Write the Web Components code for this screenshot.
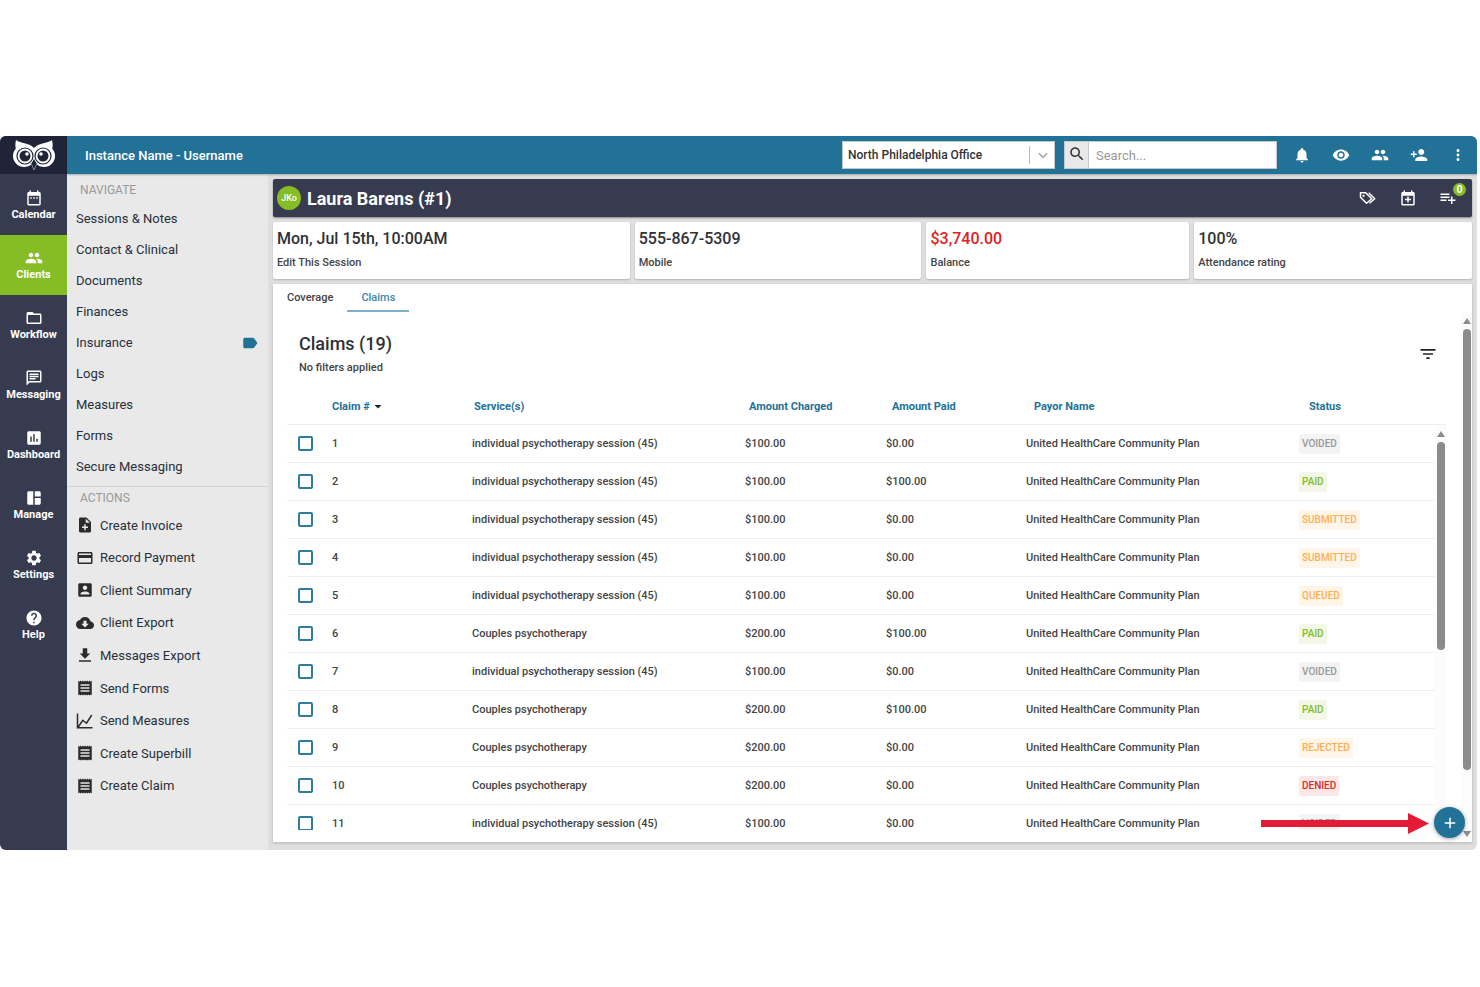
<!DOCTYPE html>
<html lang="en">
<head>
<meta charset="utf-8">
<meta name="viewport" content="width=device-width, initial-scale=1">
<title>Claims</title>
<style>
  :root {
    --blue: #227297;
    --navy: #363b4f;
    --green: #86bc25;
    --ink: #2f3136;
    --grey: #e9e9e9;
  }
  body {
    box-sizing: border-box;
    height: 100vh;
    margin: 0;
    padding: 136px 3px 137px 0;
    background: #fff;
    color: var(--ink);
    font-family: Roboto, "Liberation Sans", sans-serif;
    font-size: 12px;
    font-weight: 500;
  }
</style>
</head>
<body>
<practice-app></practice-app>

<script>
const ICONS = {
  calendar: '<path d="M9 11H7v2h2v-2zm4 0h-2v2h2v-2zm4 0h-2v2h2v-2zm2-7h-1V2h-2v2H8V2H6v2H5c-1.1 0-2 .9-2 2v14c0 1.1.9 2 2 2h14c1.1 0 2-.9 2-2V6c0-1.1-.9-2-2-2zm0 16H5V9h14v11z"/>',
  people: '<path d="M16 11c1.66 0 2.99-1.34 2.99-3S17.66 5 16 5s-3 1.34-3 3 1.34 3 3 3zm-8 0c1.66 0 2.99-1.34 2.99-3S9.66 5 8 5 5 6.34 5 8s1.34 3 3 3zm0 2c-2.33 0-7 1.17-7 3.5V19h14v-2.5c0-2.33-4.67-3.5-7-3.5zm8 0c-.29 0-.62.02-.97.05 1.16.84 1.97 1.97 1.97 3.45V19h6v-2.5c0-2.33-4.67-3.5-7-3.5z"/>',
  folder: '<path d="M20 6h-8l-2-2H4c-1.1 0-2 .9-2 2v12c0 1.1.9 2 2 2h16c1.1 0 2-.9 2-2V8c0-1.1-.9-2-2-2zm0 12H4V8h16v10z"/>',
  chat: '<path d="M4 4h16v12H5.17L4 17.17V4m0-2c-1.1 0-2 .9-2 2v18l4-4h14c1.1 0 2-.9 2-2V4c0-1.1-.9-2-2-2H4zm2 10h8v2H6v-2zm0-3h12v2H6V9zm0-3h12v2H6V6z"/>',
  chart: '<path d="M19 3H5c-1.1 0-2 .9-2 2v14c0 1.1.9 2 2 2h14c1.1 0 2-.9 2-2V5c0-1.1-.9-2-2-2zM9 17H7v-7h2v7zm4 0h-2V7h2v10zm4 0h-2v-4h2v4z"/>',
  manage: '<path d="M11 21H5c-1.1 0-2-.9-2-2V5c0-1.1.9-2 2-2h6v18zm2 0h6c1.1 0 2-.9 2-2v-7h-8v9zm8-11V5c0-1.1-.9-2-2-2h-6v7h8z"/>',
  settings: '<path d="M19.14 12.94c.04-.3.06-.61.06-.94 0-.32-.02-.64-.07-.94l2.03-1.58c.18-.14.23-.41.12-.61l-1.92-3.32c-.12-.22-.37-.29-.59-.22l-2.39.96c-.5-.38-1.03-.7-1.62-.94l-.36-2.54c-.04-.24-.24-.41-.48-.41h-3.84c-.24 0-.43.17-.47.41l-.36 2.54c-.59.24-1.13.57-1.62.94l-2.39-.96c-.22-.08-.47 0-.59.22L2.74 8.87c-.12.21-.08.47.12.61l2.03 1.58c-.05.3-.09.63-.09.94s.02.64.07.94l-2.03 1.58c-.18.14-.23.41-.12.61l1.92 3.32c.12.22.37.29.59.22l2.39-.96c.5.38 1.03.7 1.62.94l.36 2.54c.05.24.24.41.48.41h3.84c.24 0 .44-.17.47-.41l.36-2.54c.59-.24 1.13-.56 1.62-.94l2.39.96c.22.08.47 0 .59-.22l1.92-3.32c.12-.22.07-.47-.12-.61l-2.01-1.58zM12 15.6c-1.98 0-3.6-1.62-3.6-3.6s1.62-3.6 3.6-3.6 3.6 1.62 3.6 3.6-1.62 3.6-3.6 3.6z"/>',
  help: '<path d="M12 2C6.48 2 2 6.48 2 12s4.48 10 10 10 10-4.48 10-10S17.52 2 12 2zm1 17h-2v-2h2v2zm2.07-7.75l-.9.92C13.45 12.9 13 13.5 13 15h-2v-.5c0-1.1.45-2.1 1.17-2.83l1.24-1.26c.37-.36.59-.86.59-1.41 0-1.1-.9-2-2-2s-2 .9-2 2H8c0-2.21 1.79-4 4-4s4 1.79 4 4c0 .88-.36 1.68-.93 2.25z"/>',
  bell: '<path d="M12 22c1.1 0 2-.9 2-2h-4c0 1.1.89 2 2 2zm6-6v-5c0-3.07-1.64-5.64-4.5-6.32V4c0-.83-.67-1.5-1.5-1.5s-1.5.67-1.5 1.5v.68C7.63 5.36 6 7.92 6 11v5l-2 2v1h16v-1l-2-2z"/>',
  eye: '<path d="M12 4.5C7 4.5 2.73 7.61 1 12c1.73 4.39 6 7.5 11 7.5s9.27-3.11 11-7.5c-1.73-4.39-6-7.5-11-7.5zM12 17c-2.76 0-5-2.24-5-5s2.24-5 5-5 5 2.24 5 5-2.24 5-5 5zm0-8c-1.66 0-3 1.34-3 3s1.34 3 3 3 3-1.34 3-3-1.34-3-3-3z"/>',
  'person-add': '<path d="M15 12c2.21 0 4-1.79 4-4s-1.79-4-4-4-4 1.79-4 4 1.79 4 4 4zm-9-2V7H4v3H1v2h3v3h2v-3h3v-2H6zm9 4c-2.67 0-8 1.34-8 4v2h16v-2c0-2.66-5.33-4-8-4z"/>',
  more: '<path d="M12 8c1.1 0 2-.9 2-2s-.9-2-2-2-2 .9-2 2 .9 2 2 2zm0 2c-1.1 0-2 .9-2 2s.9 2 2 2 2-.9 2-2-.9-2-2-2zm0 6c-1.1 0-2 .9-2 2s.9 2 2 2 2-.9 2-2-.9-2-2-2z"/>',
  search: '<path d="M15.5 14h-.79l-.28-.27C15.41 12.59 16 11.11 16 9.5 16 5.91 13.09 3 9.5 3S3 5.91 3 9.5 5.91 16 9.5 16c1.61 0 3.09-.59 4.23-1.57l.27.28v.79l5 4.99L20.49 19l-4.99-5zm-6 0C7.01 14 5 11.99 5 9.5S7.01 5 9.5 5 14 7.01 14 9.5 11.99 14 9.5 14z"/>',
  down: '<path d="M5 9l7 7 7-7" fill="none" stroke="currentColor" stroke-width="3"/>',
  label: '<path d="M17.63 5.84C17.27 5.33 16.67 5 16 5H5c-1.1 0-2 .9-2 2v10c0 1.1.9 2 2 2h11c.67 0 1.27-.33 1.63-.84L22 12l-4.37-6.16z"/>',
  'note-add': '<path d="M14 2H6c-1.1 0-2 .9-2 2v16c0 1.1.89 2 2 2h12c1.1 0 2-.9 2-2V8l-6-6zm2 14h-3v3h-2v-3H8v-2h3v-3h2v3h3v2zm-3-7V3.5L18.5 9H13z"/>',
  card: '<path d="M20 4H4c-1.11 0-2 .89-2 2v12c0 1.11.89 2 2 2h16c1.11 0 2-.89 2-2V6c0-1.11-.89-2-2-2zm0 14H4v-6h16v6zm0-10H4V6h16v2z"/>',
  account: '<path d="M3 5v14c0 1.1.89 2 2 2h14c1.1 0 2-.9 2-2V5c0-1.1-.9-2-2-2H5c-1.11 0-2 .9-2 2zm12 4c0 1.66-1.34 3-3 3s-3-1.34-3-3 1.34-3 3-3 3 1.34 3 3zm-9 8c0-2 4-3.1 6-3.1s6 1.1 6 3.1v1H6v-1z"/>',
  cloud: '<path d="M19.35 10.04C18.67 6.59 15.64 4 12 4 9.11 4 6.6 5.64 5.35 8.04 2.34 8.36 0 10.91 0 14c0 3.31 2.69 6 6 6h13c2.76 0 5-2.24 5-5 0-2.64-2.05-4.78-4.65-4.96zM17 13l-5 5-5-5h3V9h4v4h3z"/>',
  download: '<path d="M19 10h-4V3H9v7H5l7 7 7-7zM4 19v2h16v-2H4z"/>',
  receipt: '<path d="M18 17H6v-2h12v2zm0-4H6v-2h12v2zm0-4H6V7h12v2zM3 22l1.5-1.5L6 22l1.5-1.5L9 22l1.5-1.5L12 22l1.5-1.5L15 22l1.5-1.5L18 22l1.5-1.5L21 22V2l-1.5 1.5L18 2l-1.5 1.5L15 2l-1.5 1.5L12 2l-1.5 1.5L9 2 7.5 3.5 6 2 4.5 3.5 3 2v20z"/>',
  trend: '<path d="M2 2v19h20M3 20l6-9 5 4 7-11" fill="none" stroke="currentColor" stroke-width="2"/>',
  tags: '<g fill="none" stroke="currentColor" stroke-width="2" stroke-linejoin="round"><path d="M2 5v6l8 8 7-6-8-8z"/><path d="M13 5l8 8-7 6"/></g><circle cx="6" cy="9" r="1.5"/>',
  'calendar-add': '<path d="M19 4h-1V2h-2v2H8V2H6v2H5c-1.1 0-2 .9-2 2v14c0 1.1.9 2 2 2h14c1.1 0 2-.9 2-2V6c0-1.1-.9-2-2-2zm0 16H5V9h14v11zM11 10h2v3h3v2h-3v3h-2v-3H8v-2h3z"/>',
  'list-add': '<path d="M14 10H2v2h12v-2zm0-4H2v2h12V6zm4 8v-4h-2v4h-4v2h4v4h2v-4h4v-2h-4zM2 16h8v-2H2v2z"/>',
  filter: '<path d="M10 18h4v-2h-4v2zM3 6v2h18V6H3zm3 7h12v-2H6v2z"/>',
  plus: '<path d="M19 13h-6v6h-2v-6H5v-2h6V5h2v6h6v2z"/>',
  sort: '<path d="M5 8h14l-7 7z"/>'
};

class AppIcon extends HTMLElement {
  constructor() {
    super();
    this.attachShadow({ mode: "open" });
  }

  connectedCallback() {
    this.shadowRoot.innerHTML = /*html*/ `
      <style>
        :host { display: inline-flex; flex: none; width: 18px; height: 18px; }
        svg { width: 100%; height: 100%; fill: currentColor; }
      </style>
      <svg viewBox="0 0 24 24" aria-hidden="true">${ICONS[this.getAttribute("name")]}</svg>
    `;
  }
}

class OwlLogo extends HTMLElement {
  constructor() {
    super();
    this.attachShadow({ mode: "open" });
  }

  connectedCallback() {
    this.shadowRoot.innerHTML = /*html*/ `
      <style>
        :host { display: flex; align-items: center; justify-content: center; height: 38px; background: #1f2438; }
        svg { width: 42px; height: 32px; }
      </style>
      <svg viewBox="0 0 42 32" role="img" aria-label="Owl">
        <g fill="#fff">
          <path d="M3 1c5 4 12 2 18 8 6-6 13-4 18-8 1 4 1 8-1 12L21 25 4 13C2 9 2 5 3 1z"/>
          <circle cx="11" cy="17" r="11"/>
          <circle cx="31" cy="17" r="11"/>
        </g>
        <g fill="none" stroke="#1f2438" stroke-width="1.2">
          <circle cx="12" cy="17" r="8"/>
          <circle cx="30" cy="17" r="8"/>
        </g>
        <g fill="#1f2438">
          <circle cx="12" cy="17" r="5.500"/>
          <circle cx="30" cy="17" r="5.500"/>
          <path d="M21 20l3 5-3 6-3-6z"/>
        </g>
        <path d="M18 24l3 7 3-7" fill="none" stroke="#80869a" stroke-width="1"/>
        <g fill="#fff">
          <circle cx="14" cy="15" r="1.800"/>
          <circle cx="28" cy="15" r="1.800"/>
        </g>
      </svg>
    `;
  }
}

class RailItem extends HTMLElement {
  constructor() {
    super();
    this.attachShadow({ mode: "open" });
  }

  connectedCallback() {
    this.shadowRoot.innerHTML = /*html*/ `
      <style>
        :host { display: block; }
        :host([active]) { background: var(--green); }
        a {
          display: flex;
          flex-direction: column;
          align-items: center;
          justify-content: center;
          height: 60px;
          color: #fff;
          font-size: 11px;
          font-weight: 700;
          line-height: 15px;
          text-decoration: none;
        }
      </style>
      <a href="#"><app-icon name="${this.getAttribute("icon")}"></app-icon><slot></slot></a>
    `;
  }
}

class AppRail extends HTMLElement {
  constructor() {
    super();
    this.attachShadow({ mode: "open" });
  }

  connectedCallback() {
    this.shadowRoot.innerHTML = /*html*/ `
      <style>
        :host { display: block; background: var(--navy); }
        nav { padding-top: 1px; }
      </style>
      <owl-logo></owl-logo>
      <nav>
        <rail-item icon="calendar">Calendar</rail-item>
        <rail-item icon="people" active>Clients</rail-item>
        <rail-item icon="folder">Workflow</rail-item>
        <rail-item icon="chat">Messaging</rail-item>
        <rail-item icon="chart">Dashboard</rail-item>
        <rail-item icon="manage">Manage</rail-item>
        <rail-item icon="settings">Settings</rail-item>
        <rail-item icon="help">Help</rail-item>
      </nav>
    `;
  }
}

class TopBar extends HTMLElement {
  constructor() {
    super();
    this.attachShadow({ mode: "open" });
  }

  connectedCallback() {
    this.shadowRoot.innerHTML = /*html*/ `
      <style>
        :host {
          display: flex;
          align-items: center;
          box-sizing: border-box;
          height: 38px;
          padding-left: 18px;
          background: var(--blue);
          color: #fff;
          box-shadow: 0 1px 2px rgba(0, 0, 0, .25);
        }
        strong { flex: 1; font-size: 13px; font-weight: 500; }
        .office { position: relative; width: 213px; margin-right: 9px; }
        select, input {
          box-sizing: border-box;
          width: 100%;
          height: 28px;
          margin: 0;
          border: 1px solid #c4c8ca;
          border-radius: 0;
          background: #fff;
          color: #333;
          font: inherit;
        }
        select { appearance: none; padding: 0 32px 0 5px; font-size: 12px; }
        .arrow {
          position: absolute;
          top: 5px;
          right: 5px;
          display: flex;
          align-items: center;
          height: 18px;
          padding-left: 6px;
          border-left: 1px solid #bbb;
          color: #aaa;
          pointer-events: none;
        }
        .arrow app-icon { width: 14px; height: 14px; }
        form { display: flex; width: 213px; margin-right: 5px; }
        form button {
          width: 24px;
          height: 28px;
          padding: 0;
          border: 1px solid #c4c8ca;
          border-right: 0;
          background: var(--grey);
          color: #333;
        }
        form input { flex: 1; width: 0; padding: 0 7px; font-size: 13px; font-weight: 400; }
        input::placeholder { color: #999; }
        .tools { display: flex; }
        .tools button {
          display: flex;
          justify-content: center;
          width: 39px;
          padding: 0;
          border: 0;
          background: none;
          color: inherit;
        }
      </style>
      <strong>Instance Name - Username</strong>
      <div class="office">
        <select aria-label="Office"><option>North Philadelphia Office</option></select>
        <span class="arrow"><app-icon name="down"></app-icon></span>
      </div>
      <form>
        <button type="button" aria-label="Search"><app-icon name="search"></app-icon></button>
        <input type="text" placeholder="Search..." aria-label="Search">
      </form>
      <div class="tools">
        <button aria-label="Notifications"><app-icon name="bell"></app-icon></button>
        <button aria-label="Watch"><app-icon name="eye"></app-icon></button>
        <button aria-label="Clients"><app-icon name="people"></app-icon></button>
        <button aria-label="Add client"><app-icon name="person-add"></app-icon></button>
        <button aria-label="More"><app-icon name="more"></app-icon></button>
      </div>
    `;
  }
}

class SideMenu extends HTMLElement {
  constructor() {
    super();
    this.attachShadow({ mode: "open" });
  }

  connectedCallback() {
    this.shadowRoot.innerHTML = /*html*/ `
      <style>
        :host {
          display: flex;
          flex-direction: column;
          background: var(--grey);
          font-size: 13px;
        }
        h2 { margin: 0; padding: 0 13px; color: #999; font-size: 12px; font-weight: 400; line-height: 16px; }
        ul { margin: 0; padding: 0; list-style: none; }
        a { display: flex; align-items: center; color: #27303a; font-weight: 400; text-decoration: none; }
        .pages { padding: 8px 0 4px; border-bottom: 1px solid #d4d4d4; }
        .pages ul { padding-top: 5px; }
        .pages a { justify-content: space-between; height: 31px; padding: 0 9px; }
        .pages app-icon { color: var(--blue); }
        .actions { display: flex; flex: 1; flex-direction: column; padding-top: 3px; }
        .actions ul { display: grid; flex: 1; grid-auto-rows: 1fr; padding: 3px 0 48px; }
        .actions li { display: flex; }
        .actions a { gap: 6px; padding: 0 9px; }
        .actions app-icon { color: #2b2b2b; }
      </style>
      <nav class="pages">
        <h2>NAVIGATE</h2>
        <ul>
          <li><a href="#">Sessions &amp; Notes</a></li>
          <li><a href="#">Contact &amp; Clinical</a></li>
          <li><a href="#">Documents</a></li>
          <li><a href="#">Finances</a></li>
          <li><a href="#">Insurance <app-icon name="label"></app-icon></a></li>
          <li><a href="#">Logs</a></li>
          <li><a href="#">Measures</a></li>
          <li><a href="#">Forms</a></li>
          <li><a href="#">Secure Messaging</a></li>
        </ul>
      </nav>
      <nav class="actions">
        <h2>ACTIONS</h2>
        <ul>
          <li><a href="#"><app-icon name="note-add"></app-icon>Create Invoice</a></li>
          <li><a href="#"><app-icon name="card"></app-icon>Record Payment</a></li>
          <li><a href="#"><app-icon name="account"></app-icon>Client Summary</a></li>
          <li><a href="#"><app-icon name="cloud"></app-icon>Client Export</a></li>
          <li><a href="#"><app-icon name="download"></app-icon>Messages Export</a></li>
          <li><a href="#"><app-icon name="receipt"></app-icon>Send Forms</a></li>
          <li><a href="#"><app-icon name="trend"></app-icon>Send Measures</a></li>
          <li><a href="#"><app-icon name="receipt"></app-icon>Create Superbill</a></li>
          <li><a href="#"><app-icon name="receipt"></app-icon>Create Claim</a></li>
        </ul>
      </nav>
    `;
  }
}

class ClientBar extends HTMLElement {
  constructor() {
    super();
    this.attachShadow({ mode: "open" });
  }

  connectedCallback() {
    this.shadowRoot.innerHTML = /*html*/ `
      <style>
        :host {
          display: flex;
          align-items: center;
          height: 38px;
          padding: 0 15px 0 4px;
          border-radius: 2px;
          background: var(--navy);
          color: #fff;
          box-shadow: 0 1px 2px rgba(0, 0, 0, .4);
        }
        .avatar {
          width: 24px;
          height: 24px;
          margin-right: 6px;
          border-radius: 50%;
          background: var(--green);
          font-size: 9px;
          line-height: 24px;
          text-align: center;
        }
        h1 { flex: 1; margin: 0; font-size: 18px; font-weight: 700; }
        .tools { display: flex; gap: 22px; }
        button { position: relative; display: flex; padding: 0; border: 0; background: none; color: inherit; }
        .count {
          position: absolute;
          top: -6px;
          right: -9px;
          width: 13px;
          height: 13px;
          border-radius: 50%;
          background: var(--green);
          font-size: 11px;
          font-weight: 700;
          line-height: 13px;
        }
      </style>
      <span class="avatar">JKo</span>
      <h1>Laura Barens (#1)</h1>
      <div class="tools">
        <button aria-label="Tags"><app-icon name="tags"></app-icon></button>
        <button aria-label="Add session"><app-icon name="calendar-add"></app-icon></button>
        <button aria-label="Tasks"><app-icon name="list-add"></app-icon><span class="count">0</span></button>
      </div>
    `;
  }
}

class StatCard extends HTMLElement {
  constructor() {
    super();
    this.attachShadow({ mode: "open" });
  }

  connectedCallback() {
    this.shadowRoot.innerHTML = /*html*/ `
      <style>
        :host {
          display: flex;
          flex-direction: column;
          gap: 5px;
          padding: 6px 4px 8px;
          border-radius: 2px;
          background: #fff;
          box-shadow: 0 1px 2px rgba(0, 0, 0, .2);
        }
        .value { font-size: 16px; line-height: 22px; }
        :host([debt]) .value { color: #dd2222; }
        .label { color: #444; font-size: 11px; line-height: 16px; }
      </style>
      <span class="value"><slot></slot></span>
      <span class="label">${this.getAttribute("label")}</span>
    `;
  }
}

class ScrollTrack extends HTMLElement {
  constructor() {
    super();
    this.attachShadow({ mode: "open" });
  }

  connectedCallback() {
    const size = this.getAttribute("thumb");
    this.shadowRoot.innerHTML = /*html*/ `
      <style>
        :host { display: flex; flex-direction: column; align-items: center; width: 11px; background: #fcfcfc; }
        svg { flex: none; width: 8px; height: 6px; margin: 6px 0 5px; fill: #8b8b8b; }
        .lane { flex: 1; }
        .thumb { width: 8px; height: ${size}%; border-radius: 4px; background: #8b8b8b; }
      </style>
      <svg viewBox="0 0 8 6"><path d="M4 0l4 6H0z"/></svg>
      <div class="lane"><div class="thumb"></div></div>
      <svg viewBox="0 0 8 6"><path d="M0 0h8L4 6z"/></svg>
    `;
  }
}

class StatusBadge extends HTMLElement {
  constructor() {
    super();
    this.attachShadow({ mode: "open" });
  }

  connectedCallback() {
    this.shadowRoot.innerHTML = /*html*/ `
      <style>
        :host {
          display: inline-block;
          padding: 0 3px;
          border-radius: 2px;
          background: #fff5e9;
          color: #ffae52;
          font-size: 10px;
          line-height: 20px;
        }
        :host([kind="VOIDED"]) { background: #f3f3f3; color: #999; }
        :host([kind="PAID"]) { background: #f2f7e8; color: #86bc25; }
        :host([kind="DENIED"]) { background: #fde7e7; color: #d92b2b; }
      </style>
      ${this.getAttribute("kind")}
    `;
  }
}

class ClaimsTable extends HTMLElement {
  constructor() {
    super();
    this.attachShadow({ mode: "open" });
    const single = "individual psychotherapy session (45)";
    const couples = "Couples psychotherapy";
    this.claims = [
      [single, "$100.00", "$0.00", "VOIDED"],
      [single, "$100.00", "$100.00", "PAID"],
      [single, "$100.00", "$0.00", "SUBMITTED"],
      [single, "$100.00", "$0.00", "SUBMITTED"],
      [single, "$100.00", "$0.00", "QUEUED"],
      [couples, "$200.00", "$100.00", "PAID"],
      [single, "$100.00", "$0.00", "VOIDED"],
      [couples, "$200.00", "$100.00", "PAID"],
      [couples, "$200.00", "$0.00", "REJECTED"],
      [couples, "$200.00", "$0.00", "DENIED"],
      [single, "$100.00", "$0.00", "VOIDED"]
    ];
  }

  row([service, charged, paid, status], i) {
    return /*html*/ `
      <tr>
        <td><input type="checkbox" aria-label="Select claim ${i + 1}"></td>
        <td>${i + 1}</td>
        <td>${service}</td>
        <td>${charged}</td>
        <td>${paid}</td>
        <td>United HealthCare Community Plan</td>
        <td><status-badge kind="${status}"></status-badge></td>
      </tr>
    `;
  }

  connectedCallback() {
    this.shadowRoot.innerHTML = /*html*/ `
      <style>
        :host { position: relative; display: flex; min-height: 0; }
        table { display: flex; flex: 1; flex-direction: column; min-height: 0; font-size: 11px; }
        thead { display: block; border-bottom: 1px solid #eee; }
        tbody { display: block; flex: 1; min-height: 0; margin-right: 11px; overflow: hidden; }
        tr { display: grid; align-items: center; height: 37px; border-bottom: 1px solid #efefef; }
        thead tr { grid-template-columns: 45px 142fr 275fr 143fr 142fr 275fr 137fr; height: 36px; border: 0; }
        tbody tr { grid-template-columns: 45px 140fr 273fr 141fr 140fr 273fr 136fr; }
        th, td { padding: 0; text-align: left; white-space: nowrap; }
        th { color: var(--blue); font-weight: 700; }
        td { color: #444; }
        th app-icon { width: 12px; height: 12px; vertical-align: -3px; color: #222; }
        td:first-child { display: flex; padding-left: 11px; }
        input {
          appearance: none;
          box-sizing: border-box;
          width: 15px;
          height: 15px;
          margin: 0;
          border: 2px solid #2f7ca3;
          border-radius: 2px;
          background: #fff;
        }
        scroll-track { position: absolute; top: 37px; right: 0; bottom: 0; }
      </style>
      <table>
        <thead>
          <tr>
            <th></th>
            <th>Claim # <app-icon name="sort"></app-icon></th>
            <th>Service(s)</th>
            <th>Amount Charged</th>
            <th>Amount Paid</th>
            <th>Payor Name</th>
            <th>Status</th>
          </tr>
        </thead>
        <tbody>${this.claims.map(this.row).join("")}</tbody>
      </table>
      <scroll-track thumb="56"></scroll-track>
    `;
  }
}

class ClaimsPanel extends HTMLElement {
  constructor() {
    super();
    this.attachShadow({ mode: "open" });
  }

  connectedCallback() {
    this.shadowRoot.innerHTML = /*html*/ `
      <style>
        :host {
          display: flex;
          flex: 1;
          flex-direction: column;
          min-height: 0;
          background: #fff;
          box-shadow: 0 1px 3px rgba(0, 0, 0, .2);
        }
        .tabs { display: flex; }
        .tabs a {
          padding: 1px 14px 0;
          border-bottom: 2px solid transparent;
          color: #444;
          font-size: 11px;
          line-height: 25px;
          text-decoration: none;
        }
        .tabs a.current { border-color: #7fb0ca; color: #3f86ac; }
        .body { display: flex; flex: 1; min-height: 0; }
        .content { display: flex; flex: 1; flex-direction: column; min-width: 0; padding: 18px 15px 12px 14px; }
        header { display: flex; align-items: center; justify-content: space-between; padding: 0 8px 10px 12px; }
        h2 { margin: 0; font-size: 18px; font-weight: 500; line-height: 28px; }
        p { margin: 0; color: #444; font-size: 11px; line-height: 20px; }
        header button { display: flex; padding: 0; border: 0; background: none; color: #222; }
        header app-icon { width: 20px; height: 20px; }
        claims-table { flex: 1; }
      </style>
      <nav class="tabs"><a href="#">Coverage</a><a href="#" class="current">Claims</a></nav>
      <div class="body">
        <div class="content">
          <header>
            <div>
              <h2>Claims (19)</h2>
              <p>No filters applied</p>
            </div>
            <button aria-label="Filter"><app-icon name="filter"></app-icon></button>
          </header>
          <claims-table></claims-table>
        </div>
        <scroll-track thumb="89"></scroll-track>
      </div>
    `;
  }
}

class PracticeApp extends HTMLElement {
  constructor() {
    super();
    this.attachShadow({ mode: "open" });
  }

  connectedCallback() {
    this.shadowRoot.innerHTML = /*html*/ `
      <style>
        :host {
          display: grid;
          grid-template-columns: 67px 201px 1fr;
          grid-template-rows: 38px 1fr;
          height: 100%;
          border-radius: 6px;
          overflow: hidden;
          background: #dfdfdf;
        }
        app-rail { grid-row: 1 / 3; }
        top-bar { grid-column: 2 / 4; z-index: 1; }
        main {
          position: relative;
          display: flex;
          flex-direction: column;
          gap: 5px;
          min-width: 0;
          min-height: 0;
          padding: 5px 5px 8px;
        }
        .stats { display: grid; grid-template-columns: 357fr 287fr 263fr 278fr; gap: 5px; }
        .add {
          position: absolute;
          right: 12px;
          bottom: 12px;
          display: flex;
          align-items: center;
          justify-content: center;
          width: 31px;
          height: 31px;
          padding: 0;
          border: 0;
          border-radius: 50%;
          background: var(--blue);
          color: #fff;
          box-shadow: 0 1px 4px rgba(0, 0, 0, .35);
        }
        .pointer { position: absolute; right: 48px; bottom: 16px; width: 168px; height: 21px; fill: #e31b36; }
      </style>
      <app-rail></app-rail>
      <top-bar></top-bar>
      <side-menu></side-menu>
      <main>
        <client-bar></client-bar>
        <div class="stats">
          <stat-card label="Edit This Session">Mon, Jul 15th, 10:00AM</stat-card>
          <stat-card label="Mobile">555-867-5309</stat-card>
          <stat-card label="Balance" debt>$3,740.00</stat-card>
          <stat-card label="Attendance rating">100%</stat-card>
        </div>
        <claims-panel></claims-panel>
        <svg class="pointer" viewBox="0 0 168 21" aria-hidden="true"><path d="M0 7h147V0l21 10.5L147 21v-7H0z"/></svg>
        <button class="add" aria-label="Add claim"><app-icon name="plus"></app-icon></button>
      </main>
    `;
  }
}

customElements.define("app-icon", AppIcon);
customElements.define("owl-logo", OwlLogo);
customElements.define("rail-item", RailItem);
customElements.define("app-rail", AppRail);
customElements.define("top-bar", TopBar);
customElements.define("side-menu", SideMenu);
customElements.define("client-bar", ClientBar);
customElements.define("stat-card", StatCard);
customElements.define("scroll-track", ScrollTrack);
customElements.define("status-badge", StatusBadge);
customElements.define("claims-table", ClaimsTable);
customElements.define("claims-panel", ClaimsPanel);
customElements.define("practice-app", PracticeApp);
</script>
</body>
</html>
